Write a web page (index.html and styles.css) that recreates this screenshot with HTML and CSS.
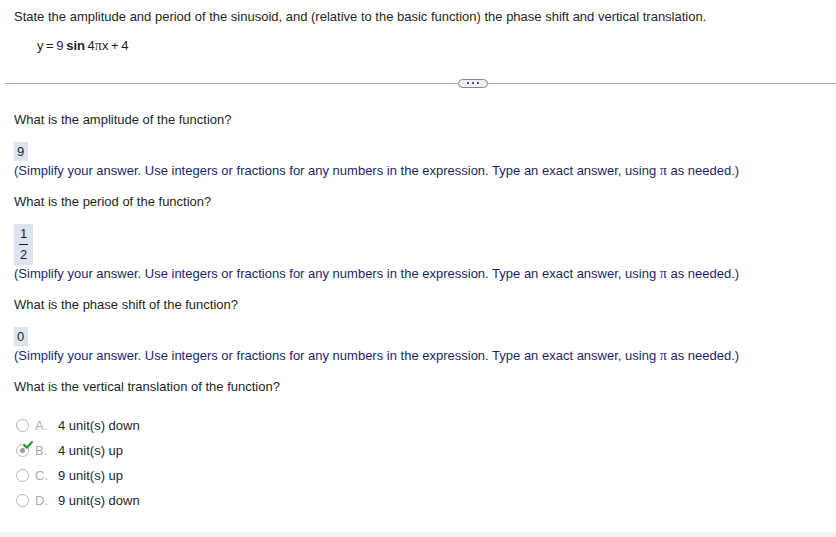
FILE: index.html
```html
<!DOCTYPE html>
<html>
<head>
<meta charset="utf-8">
<link rel="stylesheet" href="styles.css">
</head>
<body>
<div class="page">
  <div class="prompt">State the amplitude and period of the sinusoid, and (relative to the basic function) the phase shift and vertical translation.</div>
  <div class="equation">y = 9 <b>sin</b> 4<span class="pi">π</span>x + 4</div>
  <div class="sep">
    <div class="sep-line"></div>
    <div class="sep-btn"><span></span><span></span><span></span></div>
    <div class="sep-line"></div>
  </div>
  <div class="q q1">What is the amplitude of the function?</div>
  <div class="ans"><span class="box">9</span></div>
  <div class="hint">(Simplify your answer. Use integers or fractions for any numbers in the expression. Type an exact answer, using <span class="pi">π</span> as needed.)</div>
  <div class="q">What is the period of the function?</div>
  <div class="ans"><span class="box frac"><span class="num">1</span><span class="den">2</span></span></div>
  <div class="hint hint-frac">(Simplify your answer. Use integers or fractions for any numbers in the expression. Type an exact answer, using <span class="pi">π</span> as needed.)</div>
  <div class="q">What is the phase shift of the function?</div>
  <div class="ans"><span class="box">0</span></div>
  <div class="hint">(Simplify your answer. Use integers or fractions for any numbers in the expression. Type an exact answer, using <span class="pi">π</span> as needed.)</div>
  <div class="q">What is the vertical translation of the function?</div>
  <div class="options">
    <div class="opt"><span class="radio"></span><span class="letter">A.</span><span class="val">4 unit(s) down</span></div>
    <div class="opt"><span class="radio sel"><svg class="check" viewBox="0 0 10 8" width="10" height="8"><path d="M1.2 4.2 L3.8 6.6 L8.8 1.2" fill="none" stroke="#2e9a2e" stroke-width="2.3" stroke-linecap="round" stroke-linejoin="round"/></svg></span><span class="letter">B.</span><span class="val">4 unit(s) up</span></div>
    <div class="opt"><span class="radio"></span><span class="letter">C.</span><span class="val">9 unit(s) up</span></div>
    <div class="opt"><span class="radio"></span><span class="letter">D.</span><span class="val">9 unit(s) down</span></div>
  </div>
</div>
<div class="footer"></div>
</body>
</html>
```
FILE: styles.css
```css
html, body {
  margin: 0;
  padding: 0;
  background: #ffffff;
}
body {
  font-family: "Liberation Sans", Arial, sans-serif;
  font-size: 13px;
  color: #1f1f1f;
  width: 836px;
  height: 537px;
  overflow: hidden;
  position: relative;
}
.page {
  padding: 9px 0 0 14px;
  height: 523px;
}
.prompt {
  line-height: 16px;
}
.equation {
  margin-top: 13px;
  margin-left: 23px;
  line-height: 16px;
  word-spacing: -1px;
}
.pi {
  font-family: "Liberation Serif", "Times New Roman", serif;
  font-size: 14px;
}
.sep {
  display: flex;
  align-items: center;
  margin: 23px 0 0 -9px;
  height: 12px;
}
.sep-line {
  flex: 1;
  height: 1px;
  background: #bca5ad;
}
.sep-btn {
  width: 28px;
  height: 7px;
  border: 1px solid #7d8794;
  border-radius: 5px;
  background: #eef1f4;
  display: flex;
  align-items: center;
  justify-content: center;
  gap: 3px;
}
.sep-btn span {
  width: 2px;
  height: 2px;
  background: #4a5563;
}
.sep .sep-line:last-child {
  flex: 0 0 348px;
}
.q {
  line-height: 16px;
  margin-top: 15px;
}
.q1 {
  margin-top: 23px;
}
.ans {
  display: flex;
  margin-top: 14px;
}
.box {
  display: block;
  background: #dce4ef;
  padding: 2px 4px 2px 3px;
  line-height: 15px;
}
.frac {
  display: flex;
  flex-direction: column;
  align-items: center;
  padding: 2px 5px 2px 5px;
  line-height: 16px;
}
.frac .num {
  border-bottom: 1px solid #1f1f1f;
  padding: 0 1px 2px;
}
.frac .den {
  padding-top: 2px;
}
.hint {
  color: #1c1f6e;
  line-height: 16px;
  margin-top: 2px;
}
.hint-frac {
  margin-top: 1px;
}
.options {
  margin-top: 18px;
}
.opt {
  display: flex;
  align-items: center;
  height: 25px;
}
.radio {
  width: 11px;
  height: 11px;
  border: 1px solid #b5b5b5;
  border-radius: 50%;
  margin-left: 2px;
  position: relative;
  box-sizing: content-box;
}
.radio.sel::after {
  content: "";
  position: absolute;
  left: 3px;
  top: 3px;
  width: 5px;
  height: 5px;
  border-radius: 50%;
  background: #9a9a9a;
}
.check {
  position: absolute;
  left: 6px;
  top: -4px;
  z-index: 1;
}
.letter {
  color: #adadad;
  margin-left: 6px;
  width: 23px;
}
.val {
  color: #1f1f1f;
}
.footer {
  position: absolute;
  left: 0;
  right: 0;
  bottom: 0;
  height: 5px;
  background: #f2f2f2;
}
```
